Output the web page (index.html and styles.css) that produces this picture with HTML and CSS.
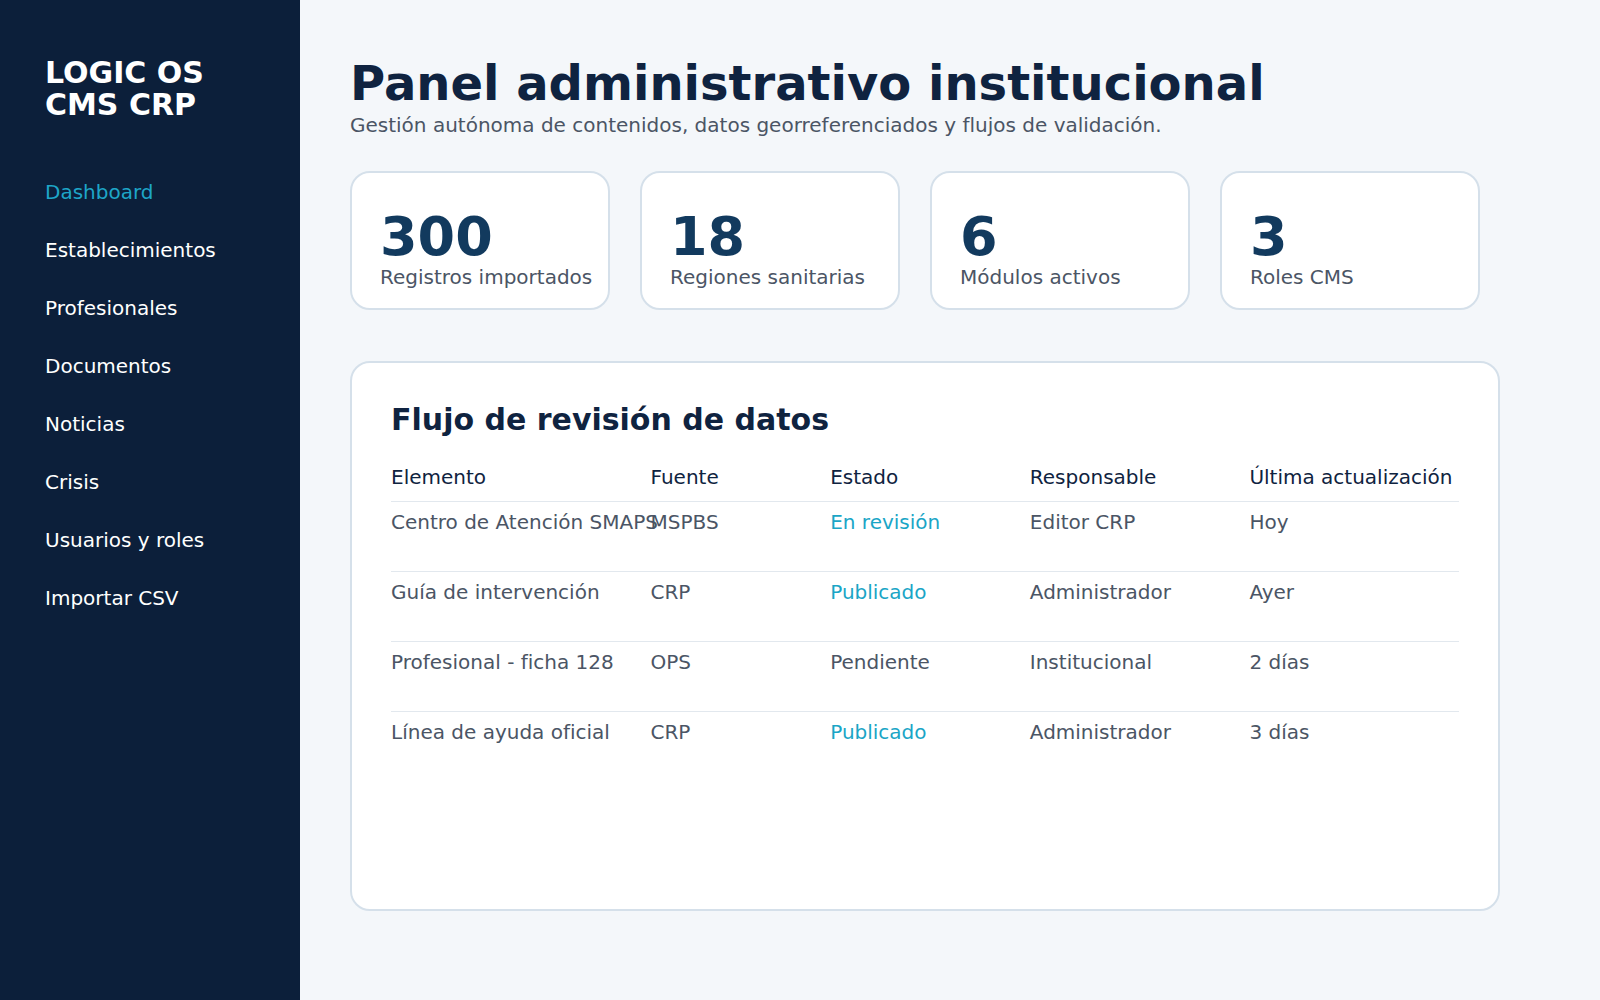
FILE: index.html
```html
<!DOCTYPE html>
<html lang="es">
<head>
    <meta charset="UTF-8">
    <meta name="viewport" content="width=device-width, initial-scale=1.0">
    <title>Logic OS - CMS CRP</title>
    <link rel="stylesheet" href="styles.css">
</head>
<body>
    <aside class="sidebar">
        <div class="brand">LOGIC OS<br>CMS CRP</div>
        <nav class="menu">
            <a href="#" class="active">Dashboard</a>
            <a href="#">Establecimientos</a>
            <a href="#">Profesionales</a>
            <a href="#">Documentos</a>
            <a href="#">Noticias</a>
            <a href="#">Crisis</a>
            <a href="#">Usuarios y roles</a>
            <a href="#">Importar CSV</a>
        </nav>
    </aside>

    <main class="main">
        <h1>Panel administrativo institucional</h1>
        <p class="subtitle">Gestión autónoma de contenidos, datos georreferenciados y flujos de validación.</p>

        <section class="stats">
            <div class="stat-card">
                <strong>300</strong>
                <span>Registros importados</span>
            </div>
            <div class="stat-card">
                <strong>18</strong>
                <span>Regiones sanitarias</span>
            </div>
            <div class="stat-card">
                <strong>6</strong>
                <span>Módulos activos</span>
            </div>
            <div class="stat-card">
                <strong>3</strong>
                <span>Roles CMS</span>
            </div>
        </section>

        <section class="panel">
            <h2>Flujo de revisión de datos</h2>
            <div class="table">
                <div class="row head">
                    <div>Elemento</div>
                    <div>Fuente</div>
                    <div>Estado</div>
                    <div>Responsable</div>
                    <div>Última actualización</div>
                </div>
                <div class="row">
                    <div>Centro de Atención SMAPS</div>
                    <div>MSPBS</div>
                    <div class="status">En revisión</div>
                    <div>Editor CRP</div>
                    <div>Hoy</div>
                </div>
                <div class="row">
                    <div>Guía de intervención</div>
                    <div>CRP</div>
                    <div class="status">Publicado</div>
                    <div>Administrador</div>
                    <div>Ayer</div>
                </div>
                <div class="row">
                    <div>Profesional - ficha 128</div>
                    <div>OPS</div>
                    <div>Pendiente</div>
                    <div>Institucional</div>
                    <div>2 días</div>
                </div>
                <div class="row">
                    <div>Línea de ayuda oficial</div>
                    <div>CRP</div>
                    <div class="status">Publicado</div>
                    <div>Administrador</div>
                    <div>3 días</div>
                </div>
            </div>
        </section>
    </main>
</body>
</html>
```

FILE: styles.css
```css
* {
    box-sizing: border-box;
}
body {
    margin: 0;
    display: flex;
    min-height: 100vh;
    font-family: "DejaVu Sans", Verdana, sans-serif;
    font-size: 20px;
    line-height: 1.5;
    background-color: #f4f7fa;
    color: #0f2340;
}
.sidebar {
    width: 300px;
    flex-shrink: 0;
    background-color: #0c1f3a;
    padding: 57px 45px;
}
.brand {
    color: #ffffff;
    font-weight: bold;
    font-size: 30px;
    line-height: 1.05;
    margin-bottom: 43px;
}
.menu a {
    display: block;
    padding: 14px 0;
    line-height: 30px;
    color: #ffffff;
    text-decoration: none;
}
.menu a.active {
    color: #1ea6c8;
}
.main {
    flex: 1;
    padding: 57px 50px;
}
h1 {
    margin: 0;
    font-size: 48px;
    line-height: 1.1;
    color: #0f2340;
}
.subtitle {
    margin: 0 0 31px;
    color: #4b5565;
}
.stats {
    display: grid;
    grid-template-columns: repeat(4, 260px);
    gap: 30px;
    margin-bottom: 51px;
}
.stat-card {
    background-color: #ffffff;
    border: 2px solid #d5e0ea;
    border-radius: 20px;
    padding: 37px 20px 18px 28px;
}
.stat-card strong {
    display: block;
    font-size: 54px;
    line-height: 1;
    color: #123a5e;
}
.stat-card span {
    display: block;
    line-height: 26px;
    white-space: nowrap;
    color: #4b5565;
}
.panel {
    max-width: 1150px;
    min-height: 550px;
    background-color: #ffffff;
    border: 2px solid #d5e0ea;
    border-radius: 20px;
    padding: 39px;
}
.panel h2 {
    margin: 0 0 24px;
    font-size: 30px;
    line-height: 1.2;
    color: #0f2340;
}
.row {
    display: grid;
    grid-template-columns: minmax(0, 1.3fr) minmax(0, 0.9fr) minmax(0, 1fr) minmax(0, 1.1fr) minmax(0, 1.05fr);
    white-space: nowrap;
    color: #4b5565;
    height: 70px;
    padding-top: 5px;
    border-top: 1px solid #e2e8ee;
}
.row.head {
    height: auto;
    padding: 0 0 9px;
    border-top: none;
    color: #0f2340;
}
.row.head + .row {
    border-top: 1px solid #e2e8ee;
}
.status {
    color: #1aa5c6;
}
```
